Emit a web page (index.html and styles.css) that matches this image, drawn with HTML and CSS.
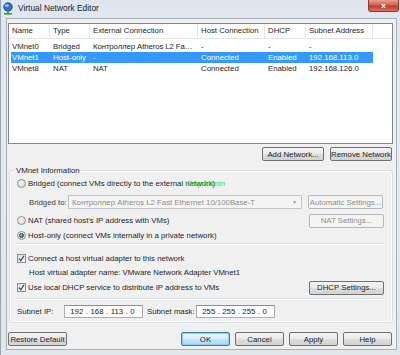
FILE: index.html
```html
<!DOCTYPE html>
<html>
<head>
<meta charset="utf-8">
<link rel="stylesheet" href="styles.css">
</head>
<body>
<div class="window">
  <div class="titlebar">
    <svg class="app-icon" width="12" height="13" viewBox="0 0 12 13">
      <circle cx="6" cy="5" r="4.3" fill="#2d6fc0" stroke="#174a8a" stroke-width="0.8"/>
      <ellipse cx="4.8" cy="3.6" rx="2" ry="1.4" fill="#9cc8f5"/>
      <rect x="5.2" y="9" width="1.6" height="2" fill="#6b7b8c"/>
      <rect x="2" y="11" width="8" height="1.6" fill="#3a9a3a"/>
    </svg>
    <span class="title">Virtual Network Editor</span>
    <div class="close"><span>x</span></div>
  </div>
  <div class="client">
    <div class="listview">
      <div class="lv-header">
        <div class="hcell">Name</div>
        <div class="hcell">Type</div>
        <div class="hcell">External Connection</div>
        <div class="hcell">Host Connection</div>
        <div class="hcell">DHCP</div>
        <div class="hcell">Subnet Address</div>
        <div class="hcell filler"></div>
      </div>
      <div class="lv-row">
        <div class="cell">VMnet0</div>
        <div class="cell">Bridged</div>
        <div class="cell ext">Контроллер Atheros L2 Fast Ethernet</div>
        <div class="cell">-</div>
        <div class="cell">-</div>
        <div class="cell">-</div>
      </div>
      <div class="lv-row selected">
        <div class="cell">VMnet1</div>
        <div class="cell">Host-only</div>
        <div class="cell ext">-</div>
        <div class="cell">Connected</div>
        <div class="cell">Enabled</div>
        <div class="cell">192.168.113.0</div>
      </div>
      <div class="lv-row">
        <div class="cell">VMnet8</div>
        <div class="cell">NAT</div>
        <div class="cell ext">NAT</div>
        <div class="cell">Connected</div>
        <div class="cell">Enabled</div>
        <div class="cell">192.168.126.0</div>
      </div>
    </div>
    <div class="list-buttons">
      <div class="btn w62">Add Network...</div>
      <div class="btn w62">Remove Network</div>
    </div>
    <div class="group">
      <div class="legend">VMnet Information</div>
      <div class="row r-bridged">
        <span class="radio"></span><span>Bridged (connect VMs directly to the external network)</span>
        <span class="watermark">iGuy Admin</span>
      </div>
      <div class="row r-bridgedto">
        <span class="bt-label">Bridged to:</span>
        <div class="combo disabled"><span>Контроллер Atheros L2 Fast Ethernet 10/100Base-T</span><span class="arrow">▼</span></div>
        <div class="btn side disabled">Automatic Settings...</div>
      </div>
      <div class="row r-nat">
        <span class="radio"></span><span>NAT (shared host's IP address with VMs)</span>
        <div class="btn side disabled push">NAT Settings...</div>
      </div>
      <div class="row r-host">
        <span class="radio checked"></span><span>Host-only (connect VMs internally in a private network)</span>
      </div>
      <div class="sep"></div>
      <div class="row r-check1">
        <span class="check"><svg width="7" height="7" viewBox="0 0 7 7"><path d="M1 3.6 L2.8 5.6 L6 0.8" fill="none" stroke="#3b4f86" stroke-width="1.3"/></svg></span><span>Connect a host virtual adapter to this network</span>
      </div>
      <div class="row r-adapter">
        <span>Host virtual adapter name: VMware Network Adapter VMnet1</span>
      </div>
      <div class="row r-check2">
        <span class="check"><svg width="7" height="7" viewBox="0 0 7 7"><path d="M1 3.6 L2.8 5.6 L6 0.8" fill="none" stroke="#3b4f86" stroke-width="1.3"/></svg></span><span>Use local DHCP service to distribute IP address to VMs</span>
        <div class="btn side push">DHCP Settings...</div>
      </div>
      <div class="sep sep2"></div>
      <div class="row r-subnet">
        <span class="sn-label">Subnet IP:</span>
        <div class="ipbox"><span>192</span><span>.</span><span>168</span><span>.</span><span>113</span><span>.</span><span>0</span></div>
        <span class="sm-label">Subnet mask:</span>
        <div class="ipbox"><span>255</span><span>.</span><span>255</span><span>.</span><span>255</span><span>.</span><span>0</span></div>
      </div>
    </div>
    <div class="footer">
      <div class="btn w59">Restore Default</div>
      <div class="btn w49 default push">OK</div>
      <div class="btn w49">Cancel</div>
      <div class="btn w49">Apply</div>
      <div class="btn w49">Help</div>
    </div>
  </div>
</div>
</body>
</html>
```

FILE: styles.css
```css
html, body {
  margin: 0;
  padding: 0;
}
body {
  width: 400px;
  height: 355px;
  overflow: hidden;
  font-family: "Liberation Sans", Arial, sans-serif;
  font-size: 7.8px;
  color: #1e1e1e;
}
.window {
  width: 400px;
  height: 355px;
  background: linear-gradient(#dfe6ee, #e6ebf1 30%, #e2e7ed);
  box-sizing: border-box;
  border-left: 1px solid #9aa4ae;
  overflow: hidden;
}
.titlebar {
  height: 18px;
  display: flex;
  align-items: center;
  padding-left: 1px;
}
.app-icon {
  margin-top: -2px;
}
.title {
  margin-left: 4px;
  font-size: 8.4px;
  color: #1a1a1a;
  margin-top: -3px;
}
.close {
  margin-left: auto;
  align-self: flex-start;
  width: 31px;
  height: 12px;
  margin-right: 1px;
  box-sizing: border-box;
  border: 1px solid #8b3a33;
  border-top: none;
  border-radius: 0 0 3px 3px;
  background: linear-gradient(#e8a093, #d2604d 45%, #c0392b 55%, #d9725c);
  display: flex;
  justify-content: center;
  align-items: center;
  color: #fff;
  font-weight: bold;
  font-size: 8px;
  line-height: 8px;
}
.client {
  margin: 0 3px 0 5px;
  height: 332px;
  box-sizing: border-box;
  background: #f0f0f0;
  border: 1px solid #a8b0ba;
  padding: 4px 3px 0 1px;
}
.listview {
  height: 121px;
  box-sizing: border-box;
  border: 1px solid #828790;
  background: #fff;
}
.lv-header {
  display: grid;
  grid-template-columns: 41px 40px 108px 67px 41px 67px 1fr;
  height: 14px;
  border-bottom: 1px solid #e5e5e5;
  margin-bottom: 2px;
}
.hcell {
  padding-left: 3px;
  line-height: 14px;
  border-right: 1px solid #e5e5e5;
  white-space: nowrap;
  overflow: hidden;
}
.hcell.filler {
  border-right: none;
}
.lv-row {
  display: grid;
  grid-template-columns: 39px 40px 108px 67px 41px 67px;
  height: 11px;
  margin-left: 2px;
  width: 362px;
  line-height: 11px;
}
.lv-row .cell {
  padding-left: 3px;
  white-space: nowrap;
}
.lv-row .cell.ext {
  overflow: hidden;
  text-overflow: ellipsis;
  padding-right: 2px;
  letter-spacing: -0.1px;
}
.lv-row .cell:first-child {
  padding-left: 1px;
}
.lv-row.selected {
  background: #3399ff;
  color: #fff;
}
.list-buttons {
  display: flex;
  justify-content: flex-end;
  gap: 6px;
  margin-top: 3px;
  padding-right: 1px;
}
.btn {
  height: 14px;
  box-sizing: border-box;
  border: 1px solid #707070;
  border-radius: 2px;
  background: linear-gradient(#f3f3f3, #ebebeb 48%, #dddddd 52%, #d2d2d2);
  display: flex;
  align-items: center;
  justify-content: center;
  white-space: nowrap;
  color: #1e1e1e;
}
.btn.disabled {
  border-color: #b6b9bc;
  background: #f4f4f4;
  color: #8e8e8e;
}
.btn.default {
  border-color: #3c7fb1;
  background: linear-gradient(#eaf6fd, #d9f0fc 48%, #bee6fd 52%, #a7d9f5);
  box-shadow: inset 0 0 0 1px #8ecbef;
}
.w62 { width: 62px; }
.w59 { width: 59px; }
.w49 { width: 49px; }
.btn.side {
  width: 75px;
}
.push {
  margin-left: auto;
}
.group {
  margin: 9px 0 0 1px;
  height: 153px;
  box-sizing: border-box;
  border: 1px solid #d5dfe5;
  border-radius: 3px;
  box-shadow: inset 0 0 0 1px #fbfbfb;
  padding: 0 8px 0 7px;
}
.legend {
  margin: -5px 0 0 -2px;
  padding: 0 1px;
  background: #f0f0f0;
  line-height: 9px;
  width: max-content;
}
.row {
  display: flex;
  align-items: center;
  white-space: nowrap;
}
.radio {
  width: 7px;
  height: 7px;
  border: 1px solid #8e8f8f;
  border-radius: 50%;
  background: radial-gradient(circle at 40% 40%, #f4f4f4, #d6d6d6);
  margin-right: 2px;
  flex: none;
  display: flex;
  align-items: center;
  justify-content: center;
}
.radio.checked::after {
  content: "";
  width: 3px;
  height: 3px;
  border-radius: 50%;
  background: radial-gradient(circle at 40% 35%, #8fd3f8, #1c5c9c);
  border: 0.5px solid #263f5a;
}
.check {
  width: 7px;
  height: 7px;
  border: 1px solid #8e8f8f;
  background: linear-gradient(135deg, #dedede, #fbfbfb);
  margin-right: 2px;
  flex: none;
  display: flex;
  align-items: center;
  justify-content: center;
}
.r-bridged {
  height: 9px;
  margin-top: 4px;
}
.watermark {
  color: #22ee22;
  margin-left: -30px;
}
.r-bridgedto {
  height: 14px;
  margin-top: 7px;
  padding-left: 12px;
}
.bt-label {
  width: 39px;
  color: #3a3a3a;
}
.combo {
  width: 234px;
  height: 14px;
  box-sizing: border-box;
  border: 1px solid #c2c5c8;
  background: #f4f4f4;
  color: #8d8d8d;
  display: flex;
  align-items: center;
  padding-left: 3px;
}
.combo .arrow {
  margin-left: auto;
  font-size: 5px;
  padding-right: 4px;
  color: #9a9a9a;
}
.r-bridgedto .btn.side {
  margin-left: 6px;
}
.r-nat {
  height: 13px;
  margin-top: 5px;
}
.r-host {
  height: 9px;
  margin-top: 4px;
}
.sep {
  height: 0;
  border-top: 1px solid #d5dfe5;
  border-bottom: 1px solid #fff;
  margin-top: 3px;
}
.r-check1 {
  height: 9px;
  margin-top: 9px;
}
.r-adapter {
  height: 9px;
  margin-top: 5px;
  padding-left: 12px;
}
.r-check2 {
  height: 13px;
  margin-top: 4px;
}
.sep2 {
  margin-top: 4px;
}
.r-subnet {
  height: 13px;
  margin-top: 5px;
}
.sn-label {
  width: 47px;
  color: #2a2a2a;
}
.sm-label {
  margin-left: 4px;
  width: 49px;
}
.ipbox {
  width: 79px;
  height: 13px;
  box-sizing: border-box;
  border: 1px solid #abadb3;
  border-top-color: #8a8d94;
  background: #fff;
  display: flex;
  align-items: center;
  justify-content: space-around;
  padding: 0 6px 0 4px;
}
.footer {
  display: flex;
  align-items: center;
  gap: 5px;
  margin-top: 9px;
  padding-right: 1px;
}
```
